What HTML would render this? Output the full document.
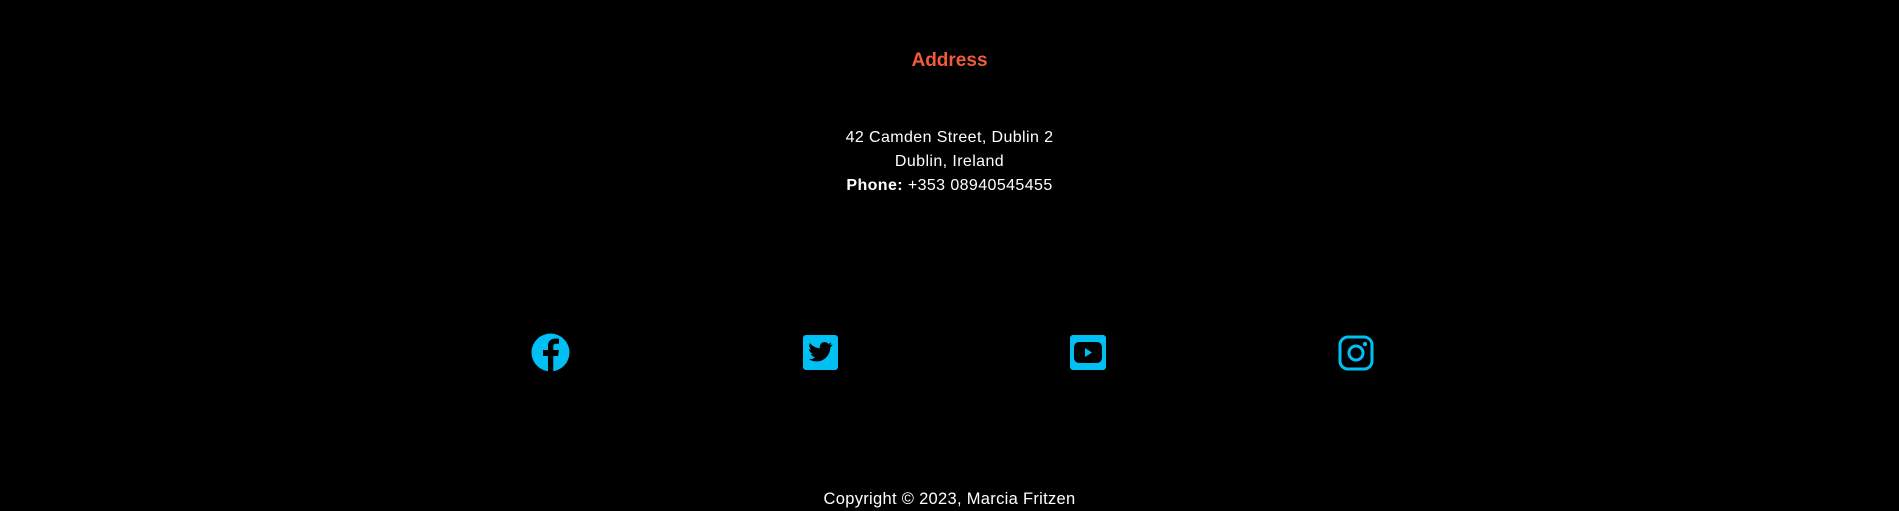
<!DOCTYPE html>
<html><head><meta charset="utf-8"><style>
html,body{margin:0;padding:0;background:#000;width:1899px;height:506px;overflow:hidden;font-family:"Liberation Sans",sans-serif;color:#fff}
.c{position:absolute;left:0;width:1899px;text-align:center}
.h{top:49px;font-size:19px;font-weight:bold;color:#f15a3b;line-height:24px}
.a{top:126px;font-size:16px;line-height:24px;letter-spacing:0.4px}
.cp{top:487px;font-size:16.5px;line-height:24px;letter-spacing:0.3px}
svg{position:absolute}
</style></head><body>
<div class="c h">Address</div>
<div class="c a">42 Camden Street, Dublin 2<br>Dublin, Ireland<br><b>Phone:</b> +353 08940545455</div>

<svg style="left:531px;top:333px" width="39" height="39" viewBox="0 0 39 39">
<circle cx="19.5" cy="19.5" r="19" fill="#00bff3"/>
<path d="M17 39V23h-5v-6h5v-4c0-5 3-7.5 7.5-7.5 1.6 0 3 .2 3.5.3v5h-2.7c-2.4 0-3 1.1-3 2.8V17h5.6l-.8 6h-4.8v16z" fill="#000"/>
</svg>

<svg style="left:803px;top:335px" width="35" height="35" viewBox="0 0 35 35">
<rect x="0" y="0" width="35" height="35" rx="3" fill="#00bff3"/>
<path d="M29 9.5c-.9.4-1.8.6-2.8.8 1-.6 1.8-1.5 2.1-2.7-.9.6-2 1-3.1 1.2a4.8 4.8 0 0 0-8.3 4.4c-4-.2-7.6-2.1-10-5.1-1.3 2.3-.4 5.1 1.5 6.4-.8 0-1.5-.2-2.2-.6 0 2.4 1.7 4.4 3.9 4.8-.7.2-1.5.2-2.2.1.6 1.9 2.4 3.4 4.5 3.4A9.7 9.7 0 0 1 6 24.2c2.1 1.4 4.7 2.2 7.4 2.2 9 0 14-7.5 13.9-14.2.9-.7 1.7-1.5 2.4-2.5z" fill="#000"/>
</svg>

<svg style="left:1070px;top:335px" width="36" height="35" viewBox="0 0 36 35">
<rect x="0" y="0" width="36" height="35" rx="3" fill="#00bff3"/>
<rect x="4" y="7" width="28" height="21" rx="5" fill="#000"/>
<path d="M15 13v9l7-4.5z" fill="#00bff3"/>
</svg>

<svg style="left:1338px;top:335px" width="36" height="36" viewBox="0 0 36 36">
<rect x="2" y="2" width="32" height="32" rx="8" fill="none" stroke="#00bff3" stroke-width="3"/>
<circle cx="18" cy="18" r="7" fill="none" stroke="#00bff3" stroke-width="3"/>
<circle cx="27" cy="9" r="2.2" fill="#00bff3"/>
</svg>

<div class="c cp">Copyright © 2023, Marcia Fritzen</div>
</body></html>
